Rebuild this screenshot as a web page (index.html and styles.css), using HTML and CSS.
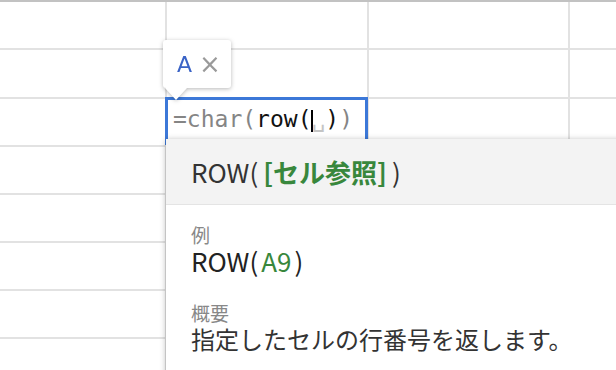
FILE: index.html
```html
<!DOCTYPE html>
<html lang="ja">
<head>
    <meta charset="UTF-8">
    <title>ROW</title>
    <link rel="stylesheet" href="styles.css">
</head>
<body>
    <div class="sheet">
        <div class="grid">
            <div class="cell"></div><div class="cell"></div><div class="cell"></div><div class="cell"></div>
            <div class="cell"></div><div class="cell"></div><div class="cell"></div><div class="cell"></div>
            <div class="cell"></div><div class="cell"></div><div class="cell"></div><div class="cell"></div>
            <div class="cell"></div><div class="cell"></div><div class="cell"></div><div class="cell"></div>
            <div class="cell"></div><div class="cell"></div><div class="cell"></div><div class="cell"></div>
            <div class="cell"></div><div class="cell"></div><div class="cell"></div><div class="cell"></div>
            <div class="cell"></div><div class="cell"></div><div class="cell"></div><div class="cell"></div>
            <div class="cell"></div><div class="cell"></div><div class="cell"></div><div class="cell"></div>
        </div>

        <!-- in-cell editor -->
        <div class="editor">
            <span class="muted">=char(</span><span class="fn">row(</span><span class="caret"></span><span class="slot">&#x2423;</span><span class="fn">)</span><span class="muted">)</span>
        </div>

        <!-- small chip above the cell -->
        <div class="chip">
            <div class="chip-card">
                <span class="chip-a">A</span>
                <span class="chip-x">&times;</span>
            </div>
            <div class="chip-arrow"></div>
        </div>

        <!-- formula help -->
        <div class="help">
            <div class="help-head">ROW(<span class="arg bold">[セル参照]</span>)</div>
            <div class="help-body">
                <div class="label">例</div>
                <div class="example">ROW(<span class="arg">A9</span>)</div>
                <div class="label gap">概要</div>
                <div class="desc">指定したセルの行番号を返します。</div>
            </div>
        </div>
    </div>
</body>
</html>
```

FILE: styles.css
```css
body {
    margin: 0;
    background: #ffffff;
    overflow: hidden;
    font-family: "Noto Sans CJK JP", "Noto Sans", sans-serif;
}
.sheet {
    position: relative;
    width: 616px;
    height: 370px;
    overflow: hidden;
}
.grid {
    display: grid;
    grid-template-columns: 165px 200px 199px 200px;
    grid-template-rows: 46px 47px;
    grid-auto-rows: 46px;
    gap: 2px;
    background: #e2e2e2;
    border-top: 2px solid #c2c2c2;
}
.cell {
    background: #ffffff;
}
.editor {
    position: absolute;
    left: 165px;
    top: 97px;
    width: 203px;
    height: 48px;
    box-sizing: border-box;
    border: 3px solid #3c78d8;
    background: #ffffff;
    padding-left: 5px;
    font-family: "DejaVu Sans Mono", monospace;
    font-size: 23px;
    line-height: 38px;
    white-space: nowrap;
}
.muted {
    color: #858585;
}
.fn {
    color: #111111;
}
.slot {
    color: #c4c4c4;
}
.caret {
    display: inline-block;
    width: 2px;
    height: 22px;
    background: #000000;
    margin-right: -2px;
    vertical-align: -5px;
}
.chip {
    position: absolute;
    left: 163px;
    top: 40px;
    filter: drop-shadow(0 1px 2px rgba(0, 0, 0, 0.28));
}
.chip-card {
    width: 68px;
    height: 48px;
    background: #ffffff;
    border-radius: 3px;
    display: flex;
    align-items: center;
    padding-left: 14px;
    box-sizing: border-box;
    gap: 7px;
}
.chip-a {
    color: #3a63c6;
    font-size: 22px;
    font-family: "DejaVu Sans", sans-serif;
}
.chip-x {
    color: #9a9a9a;
    font-size: 26px;
    font-family: "DejaVu Sans", sans-serif;
}
.chip-arrow {
    width: 0;
    height: 0;
    margin-left: 2px;
    border-left: 11px solid transparent;
    border-right: 11px solid transparent;
    border-top: 12px solid #ffffff;
}
.help {
    position: absolute;
    left: 166px;
    top: 139px;
    width: 500px;
    height: 300px;
    background: #ffffff;
    box-shadow: 0 1px 6px rgba(0, 0, 0, 0.3);
}
.help-head {
    height: 65px;
    background: #f3f3f3;
    border-bottom: 1px solid #e4e4e4;
    padding-left: 25px;
    font-size: 26px;
    line-height: 65px;
    color: #333333;
}
.help-body {
    padding: 17px 0 0 25px;
}
.arg {
    color: #38873c;
    margin: 0 3px;
}
.bold {
    font-weight: bold;
    margin: 0 5px;
}
.label {
    font-size: 19px;
    line-height: 26px;
    color: #888888;
}
.label.gap {
    margin-top: 26px;
}
.example {
    font-size: 26px;
    line-height: 26px;
    color: #222222;
}
.desc {
    font-size: 24px;
    line-height: 26px;
    color: #333333;
}
```
